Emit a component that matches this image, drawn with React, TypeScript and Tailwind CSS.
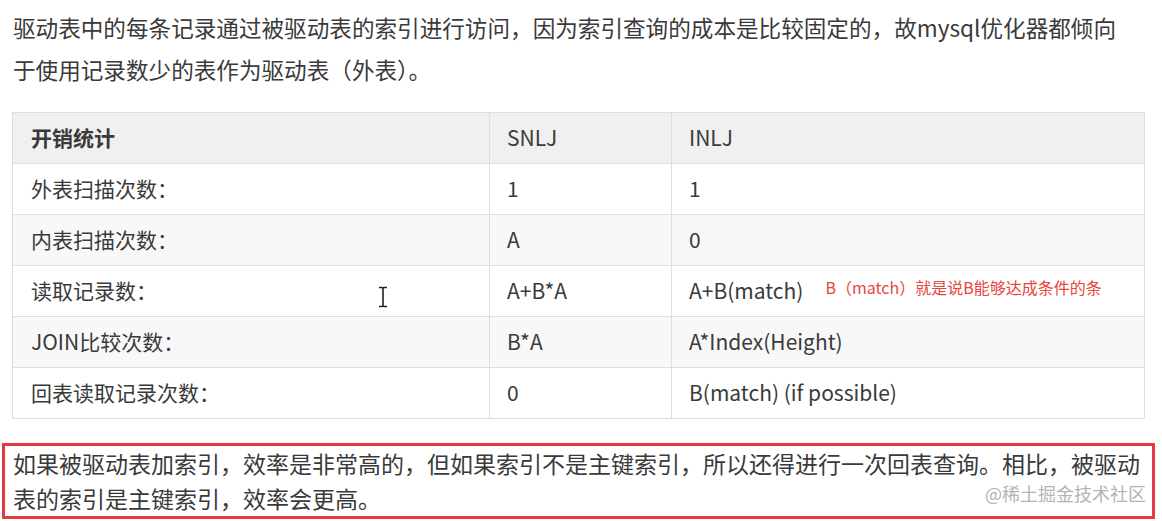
import React from "react";

const rows: [string, string, string, boolean][] = [
  ["外表扫描次数：", "1", "1", false],
  ["内表扫描次数：", "A", "0", true],
  ["读取记录数：", "A+B*A", "A+B(match)", false],
  ["JOIN比较次数：", "B*A", "A*Index(Height)", true],
  ["回表读取记录次数：", "0", "B(match) (if possible)", false],
];

export default function App() {
  return (
    <div
      className="relative w-[1162px] h-[521px] bg-white overflow-hidden text-[#3a3a3a]"
      style={{ fontFamily: '"Noto Sans CJK SC", "Noto Sans", sans-serif' }}
    >
      <div className="pl-[13px] pt-[7px]">
        <p className="w-[1120px] text-[22.6px] leading-[42px]">
          驱动表中的每条记录通过被驱动表的索引进行访问，因为索引查询的成本是比较固定的，故mysql优化器都倾向于使用记录数少的表作为驱动表（外表）。
        </p>
      </div>

      <div className="pl-[12px] mt-[21px]">
        <table className="table-fixed border-collapse w-[1132px] text-[21px]">
          <colgroup>
            <col className="w-[477px]" />
            <col className="w-[182px]" />
            <col className="w-[473px]" />
          </colgroup>
          <thead>
            <tr className="bg-[#f0f0f0] h-[51px]">
              <th className="border border-[#dedede] text-left font-bold pl-[18px]">开销统计</th>
              <th className="border border-[#dedede] text-left font-normal pl-[17px]">SNLJ</th>
              <th className="border border-[#dedede] text-left font-normal pl-[17px]">INLJ</th>
            </tr>
          </thead>
          <tbody>
            {rows.map(([a, b, c, alt], i) => (
              <tr key={i} className={`h-[51px] ${alt ? "bg-[#f8f8f8]" : "bg-white"}`}>
                <td className="border border-[#dedede] pl-[18px]">{a}</td>
                <td className="border border-[#dedede] pl-[17px]">{b}</td>
                <td className="border border-[#dedede] pl-[17px]">
                  <span>{c}</span>
                  {i === 2 && (
                    <span className="ml-[22px] text-[16px] text-[#e8453c] relative top-[-5px]">
                      B（match）就是说B能够达成条件的条
                    </span>
                  )}
                </td>
              </tr>
            ))}
          </tbody>
        </table>
      </div>

      <div className="ml-[2px] mt-[24px] w-[1153px] h-[76px] border-[3px] border-[#e23c42] pl-[8px] text-[23px] leading-[35px]">
        如果被驱动表加索引，效率是非常高的，但如果索引不是主键索引，所以还得进行一次回表查询。相比，被驱动表的索引是主键索引，效率会更高。
      </div>

      <div className="absolute left-[985px] top-[480px] text-[18px] text-[#b4b4b4] leading-[26px]">
        @稀土掘金技术社区
      </div>

      <svg className="absolute left-[378px] top-[286px]" width="10" height="22" viewBox="0 0 10 22">
        <path d="M1 1.5 H4 M6 1.5 H9 M5 2 V20 M1 20.5 H4 M6 20.5 H9 M4 1.5 Q5 1.5 5 2.5 M6 1.5 Q5 1.5 5 2.5 M4 20.5 Q5 20.5 5 19.5 M6 20.5 Q5 20.5 5 19.5" stroke="#222" strokeWidth="1.6" fill="none" />
      </svg>
    </div>
  );
}
